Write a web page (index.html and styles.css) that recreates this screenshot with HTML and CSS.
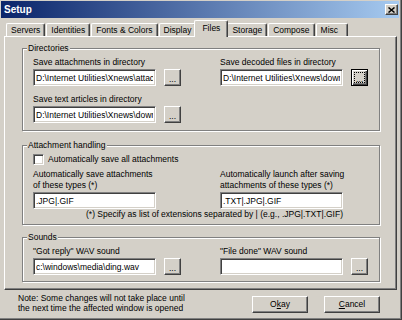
FILE: index.html
```html
<!DOCTYPE html>
<html lang="en">
<head>
  <meta charset="UTF-8">
  <meta name="viewport" content="width=device-width, initial-scale=1.0">
  <title>Setup</title>
  <link rel="stylesheet" href="styles.css">
</head>
<body>
  <div class="window">
    <div class="titlebar">
      <span class="title">Setup</span>
      <button class="close-btn" aria-label="Close">
        <svg width="7" height="6" viewBox="0 0 7 6">
          <path d="M0.5 0.5 L6.5 5.5 M6.5 0.5 L0.5 5.5" stroke="#000" stroke-width="1.5" fill="none"/>
        </svg>
      </button>
    </div>

    <div class="tabs">
      <div class="tab">Servers</div>
      <div class="tab">Identities</div>
      <div class="tab">Fonts &amp; Colors</div>
      <div class="tab">Display</div>
      <div class="tab active">Files</div>
      <div class="tab">Storage</div>
      <div class="tab">Compose</div>
      <div class="tab misc">Misc</div>
    </div>

    <div class="panel">
      <fieldset class="group dirs">
        <legend>Directories</legend>
        <div class="cols">
          <div class="field">
            <label>Save attachments in directory</label>
            <div class="row">
              <input class="text" type="text" value="D:\Internet Utilities\Xnews\attachments">
              <button class="btn browse">...</button>
            </div>
          </div>
          <div class="field">
            <label>Save decoded files in directory</label>
            <div class="row">
              <input class="text" type="text" value="D:\Internet Utilities\Xnews\download">
              <button class="btn browse focus">...</button>
            </div>
          </div>
          <div class="field">
            <label>Save text articles in directory</label>
            <div class="row">
              <input class="text" type="text" value="D:\Internet Utilities\Xnews\download">
              <button class="btn browse">...</button>
            </div>
          </div>
        </div>
      </fieldset>

      <fieldset class="group attach">
        <legend>Attachment handling</legend>
        <label class="check-row">
          <input class="check" type="checkbox">
          Automatically save all attachments
        </label>
        <div class="cols">
          <div class="field">
            <label>Automatically save attachments<br>of these types (*)</label>
            <div class="row">
              <input class="text" type="text" value=".JPG|.GIF">
            </div>
          </div>
          <div class="field">
            <label>Automatically launch after saving<br>attachments of these types (*)</label>
            <div class="row">
              <input class="text" type="text" value=".TXT|.JPG|.GIF">
            </div>
          </div>
        </div>
        <p class="footnote">(*) Specify as list of extensions separated by | (e.g., .JPG|.TXT|.GIF)</p>
      </fieldset>

      <fieldset class="group sounds">
        <legend>Sounds</legend>
        <div class="cols">
          <div class="field">
            <label>"Got reply" WAV sound</label>
            <div class="row">
              <input class="text" type="text" value="c:\windows\media\ding.wav">
              <button class="btn browse">...</button>
            </div>
          </div>
          <div class="field">
            <label>"File done" WAV sound</label>
            <div class="row">
              <input class="text" type="text" value="">
              <button class="btn browse">...</button>
            </div>
          </div>
        </div>
      </fieldset>
    </div>

    <div class="footer">
      <p class="note">Note: Some changes will not take place until<br>the next time the affected window is opened</p>
      <div class="actions">
        <button class="btn wide">O<u>k</u>ay</button>
        <button class="btn wide"><u>C</u>ancel</button>
      </div>
    </div>
  </div>
</body>
</html>
```

FILE: styles.css
```css
body {
  margin: 0;
  background-color: #d4d0c8;
  font-family: "Liberation Sans", Arial, sans-serif;
  font-size: 8.5px;
  line-height: 11px;
  color: #000;
}
.window {
  width: 402px;
  height: 320px;
  box-sizing: border-box;
  background-color: #d4d0c8;
  box-shadow: inset -1px -1px #404040, inset -2px -2px #808080;
  display: flex;
  flex-direction: column;
}
.titlebar {
  height: 17px;
  margin: 1px 3px 0 1px;
  padding: 0 1px 0 3px;
  display: flex;
  align-items: center;
  justify-content: space-between;
  background: linear-gradient(to right, #0a246a, #a6caf0);
}
.title {
  color: #fff;
  font-weight: bold;
  font-size: 10px;
}
.close-btn {
  width: 13px;
  height: 11px;
  padding: 0;
  display: flex;
  align-items: center;
  justify-content: center;
  background-color: #d4d0c8;
  border: 1px solid;
  border-color: #fff #404040 #404040 #fff;
  box-shadow: inset -1px -1px #808080;
}

/* tab strip */
.tabs {
  display: flex;
  align-items: flex-end;
  height: 16px;
  margin: 2px 0 0 6px;
}
.tab {
  height: 13px;
  box-sizing: border-box;
  padding: 0 4px;
  line-height: 12px;
  border: 1px solid;
  border-bottom: none;
  border-color: #fff #404040 #fff #fff;
  border-radius: 2px 2px 0 0;
  box-shadow: inset -1px 0 #808080;
  margin-right: 1px;
}
.tab.active {
  position: relative;
  z-index: 1;
  height: 17px;
  margin: 0 -1px -1px -3px;
  padding: 1px 7px 0 7px;
  background-color: #d4d0c8;
}
.tab.misc {
  min-width: 32px;
}

.panel {
  height: 254px;
  box-sizing: border-box;
  margin: 0 5px 0 4px;
  padding: 6px 16px 0 17px;
  border: 1px solid;
  border-color: #fff #404040 #404040 #fff;
  box-shadow: inset -1px -1px #808080;
}

/* group boxes */
.group {
  margin: 0;
  padding: 3px 10px 7px 10px;
  border: 1px solid #808080;
  box-shadow: inset 1px 1px #fff, 1px 1px #fff;
}
.group legend {
  margin-left: -6px;
  padding: 0 1px;
  background-color: #d4d0c8;
}
.group.attach {
  margin-top: 9px;
  padding-bottom: 4px;
}
.group.sounds {
  margin-top: 7px;
  padding-bottom: 6px;
}
.cols {
  display: grid;
  grid-template-columns: 187px 1fr;
}
.dirs .cols {
  row-gap: 8px;
}
.field label {
  display: block;
  margin-bottom: 1px;
}
.row {
  display: flex;
  gap: 8px;
}
.text {
  width: 123px;
  height: 17px;
  box-sizing: border-box;
  margin: 0;
  padding: 0 2px;
  font: inherit;
  background-color: #fff;
  border: 1px solid;
  border-color: #808080 #fff #fff #808080;
  box-shadow: inset 1px 1px #404040, inset -1px -1px #d4d0c8;
  outline: none;
}
.check-row {
  display: flex;
  align-items: center;
  height: 11px;
  margin-bottom: 4px;
}
.check {
  appearance: none;
  width: 11px;
  height: 11px;
  margin: 0 4px 0 0;
  background-color: #fff;
  border: 1px solid;
  border-color: #808080 #fff #fff #808080;
  box-shadow: inset 1px 1px #404040, inset -1px -1px #d4d0c8;
}
.footnote {
  margin: 0;
  padding-left: 53px;
}

/* buttons */
.btn {
  margin: 0;
  padding: 0;
  font: inherit;
  color: #000;
  background-color: #d4d0c8;
  border: 1px solid;
  border-color: #fff #404040 #404040 #fff;
  box-shadow: inset -1px -1px #808080;
}
.btn.browse {
  width: 17px;
  height: 17px;
  line-height: 18px;
}
.btn.focus {
  border-color: #000;
  box-shadow: inset 1px 1px #fff, inset -1px -1px #404040, inset -2px -2px #808080;
  outline: 1px dotted #000;
  outline-offset: -4px;
}
.btn.wide {
  width: 56px;
  height: 17px;
}

.footer {
  display: flex;
  justify-content: space-between;
  padding: 0 22px 0 18px;
}
.note {
  margin: 3px 0 0;
  line-height: 10px;
}
.actions {
  display: flex;
  gap: 16px;
  padding-top: 6px;
}
```
